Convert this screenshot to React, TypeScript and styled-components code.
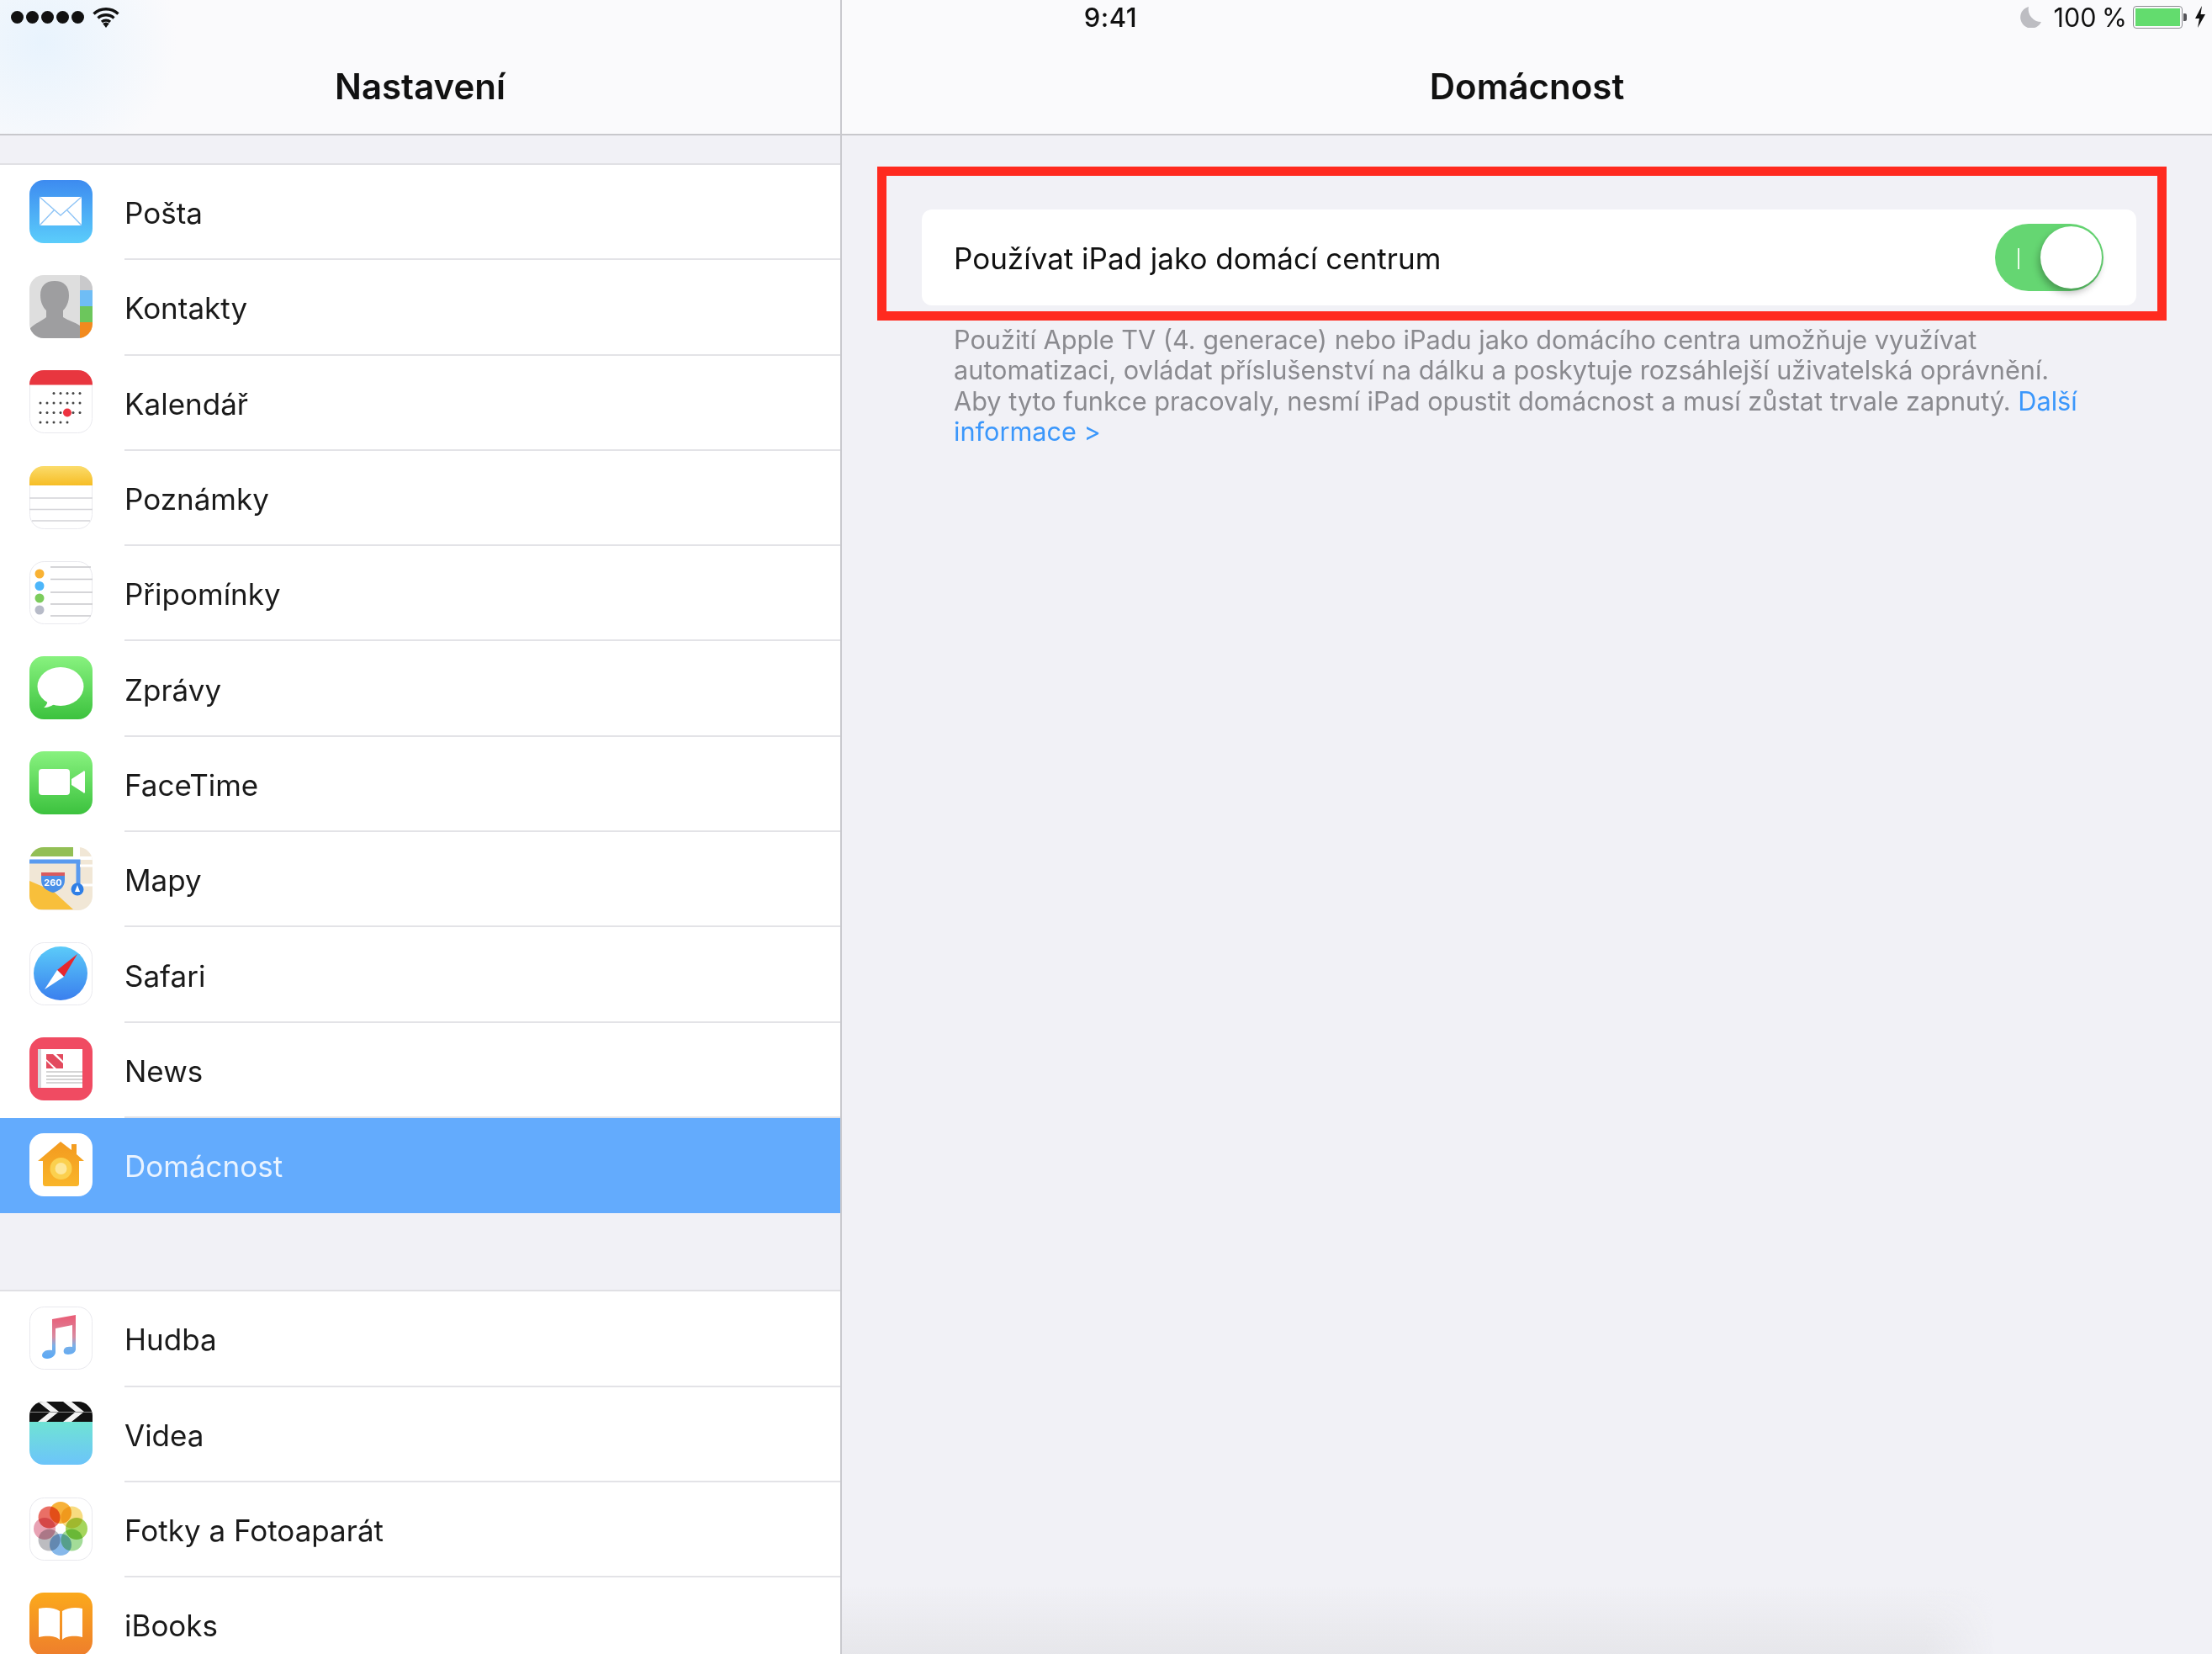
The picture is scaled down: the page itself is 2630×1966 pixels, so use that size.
import React from "react";
import styled, { createGlobalStyle } from "styled-components";

const GlobalStyle = createGlobalStyle`
  html, body {
    margin: 0;
    padding: 0;
    background: #f1f1f6;
  }
  * { box-sizing: border-box; }
`;

const Screen = styled.div`
  position: relative;
  display: flex;
  width: 2630px;
  height: 1966px;
  overflow: hidden;
  background: #f1f1f6;
  font-family: Inter, "Liberation Sans", sans-serif;
  color: #111;
`;

const StatusBar = styled.div`
  position: absolute;
  top: 0;
  left: 0;
  right: 0;
  height: 40px;
  padding: 0 8px 0 13px;
  display: grid;
  grid-template-columns: 1fr auto 1fr;
  align-items: center;
  z-index: 3;
`;
const StatusLeft = styled.div`
  display: flex;
  align-items: center;
  gap: 10px;
`;
const Dots = styled.div`
  display: flex;
  gap: 3px;
`;
const Dot = styled.span`
  width: 15px;
  height: 15px;
  border-radius: 50%;
  background: #111;
`;
const Clock = styled.div`
  font-size: 31px;
  font-weight: 500;
  letter-spacing: 0.5px;
  padding-left: 6px;
`;
const StatusRight = styled.div`
  display: flex;
  align-items: center;
  justify-content: flex-end;
  font-size: 30.5px;
  word-spacing: -2px;
`;
const Percent = styled.span`
  margin: 0 7px 0 15px;
`;
const Battery = styled.div`
  position: relative;
  width: 59px;
  height: 27px;
  padding: 2px;
  border: 1px solid #8e8e93;
  border-radius: 4px;
  margin-right: 15px;
  &::after {
    content: "";
    position: absolute;
    right: -6px;
    top: 8px;
    width: 4px;
    height: 9px;
    background: #55555a;
    border-radius: 0 2px 2px 0;
  }
`;
const BatteryFill = styled.div`
  height: 100%;
  background: #63dc6e;
`;

const Sidebar = styled.aside`
  width: 1001px;
  flex-shrink: 0;
  border-right: 2px solid #c9c9ce;
`;
const NavBar = styled.header<{ $tint?: boolean }>`
  height: 161px;
  padding-top: 75px;
  text-align: center;
  font-size: 42px;
  font-weight: 600;
  line-height: 56px;
  border-bottom: 2px solid #c8c8cc;
  background: ${(p) =>
    p.$tint
      ? "radial-gradient(ellipse 160px 150px at 50px 50px, #e8f3fd, rgba(250,250,252,0) 100%), #fafafc"
      : "#fafafc"};
`;
const Group = styled.section<{ $gap: number }>`
  margin-top: ${(p) => p.$gap}px;
  background: #fff;
  border-top: 2px solid #e0e0e4;
`;
const Row = styled.div<{ $selected?: boolean }>`
  height: 113.3px;
  padding-left: 35px;
  display: flex;
  align-items: center;
  gap: 38px;
  background: ${(p) => (p.$selected ? "#63abfd" : "#fff")};
`;
const IconBox = styled.div`
  width: 75px;
  height: 75px;
  flex-shrink: 0;
  margin-bottom: 3px;
  svg { display: block; }
`;
const Label = styled.div<{ $selected?: boolean; $last?: boolean }>`
  flex: 1;
  align-self: stretch;
  display: flex;
  align-items: center;
  padding-top: 3px;
  font-size: 35px;
  color: ${(p) => (p.$selected ? "#e9f3ff" : "#1a1a1a")};
  border-bottom: 2px solid ${(p) => (p.$last ? "transparent" : "#e3e3e7")};
`;

const Detail = styled.main`
  flex: 1;
  min-width: 0;
`;
const DetailBody = styled.div`
  padding: 37px 54px 0 42px;
`;
const Highlight = styled.div`
  width: 1533px;
  height: 183px;
  border: 11px solid #ff2a1f;
  padding: 40px 25px 7px 42px;
`;
const Card = styled.div`
  height: 114px;
  padding: 1px 39px 0 38px;
  background: #fff;
  border-radius: 12px;
  display: flex;
  align-items: center;
  justify-content: space-between;
  font-size: 35px;
`;
const Toggle = styled.div`
  position: relative;
  width: 129px;
  height: 80px;
  margin-top: -1px;
  border-radius: 40px;
  background: #65d672;
  &::before {
    content: "";
    position: absolute;
    left: 27px;
    top: 29px;
    width: 2px;
    height: 25px;
    background: #eafbe9;
  }
`;
const Knob = styled.span`
  position: absolute;
  right: 2px;
  top: 3px;
  width: 73px;
  height: 74px;
  border-radius: 50%;
  background: #fff;
  box-shadow: -2px 5px 9px rgba(0, 0, 0, 0.28);
`;
const Footnote = styled.p`
  margin: 5px 0 0 91px;
  font-size: 30.7px;
  line-height: 36.3px;
  color: #8a8a8f;
  white-space: nowrap;
`;
const MoreLink = styled.span`
  color: #3b97fb;
`;
const BottomShade = styled.div`
  position: absolute;
  left: 1001px;
  bottom: 0;
  width: 1370px;
  height: 80px;
  background: linear-gradient(rgba(226, 226, 230, 0), #e6e6ea);
  mask-image: linear-gradient(to right, #000 94%, transparent);
  pointer-events: none;
`;
const Petal = styled.circle`
  mix-blend-mode: multiply;
`;

const WifiIcon = () => (
  <svg width="32" height="25" viewBox="0 0 32 25">
    <g fill="none" stroke="#111" strokeWidth="3.4">
      <path d="M1.5 8.5a21 21 0 0 1 29 0" />
      <path d="M6.5 13.5a14 14 0 0 1 19 0" />
      <path d="M11 18a7.5 7.5 0 0 1 10 0" />
    </g>
    <path d="M16 25l-3.8-5a6 6 0 0 1 7.6 0z" fill="#111" />
  </svg>
);
const MoonIcon = () => (
  <svg width="26" height="25" viewBox="0 0 26 25">
    <path d="M11 0A13 13 0 1 0 26 18 15 15 0 0 1 11 0z" fill="#bdbdc2" />
  </svg>
);
const BoltIcon = () => (
  <svg width="12" height="26" viewBox="0 0 12 26">
    <path d="M8 0L0 15h5l-2 11 9-16H6.500z" fill="#111" />
  </svg>
);

const Frame = ({ children }: { children: React.ReactNode }) => (
  <svg width="75" height="75" viewBox="0 0 75 75">{children}</svg>
);
const Tile = ({ fill = "#fff", line = true }: { fill?: string; line?: boolean }) => (
  <rect x="0.5" y="0.5" width="74" height="74" rx="17" fill={fill} stroke={line ? "#e9e9ee" : "none"} />
);
const Fade = ({ id, from, to }: { id: string; from: string; to: string }) => (
  <defs>
    <linearGradient id={id} x1="0" y1="0" x2="0" y2="1">
      <stop offset="0" stopColor={from} />
      <stop offset="1" stopColor={to} />
    </linearGradient>
  </defs>
);

const MailIcon = () => (
  <Frame>
    <Fade id="mail" from="#3d8bf0" to="#5bcdfb" />
    <rect width="75" height="75" rx="17" fill="url(#mail)" />
    <rect x="12" y="20" width="50" height="34" fill="#fff" />
    <path d="M12 20l25 22 25-22M12 54l18-19M62 54L44 35" fill="none" stroke="#8ec4f6" strokeWidth="1.4" />
  </Frame>
);
const ContactsIcon = () => (
  <Frame>
    <clipPath id="contacts"><rect width="75" height="75" rx="17" /></clipPath>
    <g clipPath="url(#contacts)">
      <rect width="75" height="75" fill="#dedede" />
      <path d="M30 7c11 0 17 6 17 17 0 8-3 14-7 18v8c6 4 14 6 20 10v15H1V63c6-6 13-8 19-13v-8c-4-4-7-10-7-18C13 13 19 7 30 7z" fill="#9e9ea0" />
      <rect x="60" width="15" height="18" fill="#c9c9cb" />
      <rect x="60" y="18" width="15" height="19" fill="#6fbdf5" />
      <rect x="60" y="37" width="15" height="19" fill="#6cc65c" />
      <rect x="60" y="56" width="15" height="19" fill="#f28a1e" />
    </g>
  </Frame>
);
const CalendarIcon = () => {
  const rows = [
    { y: 27.5, xs: [29, 37, 45, 52, 60] },
    { y: 39, xs: [13, 21, 29, 37, 45, 52, 60] },
    { y: 50.500, xs: [13, 21, 29, 37, 52, 60] },
    { y: 62, xs: [13, 21, 29, 37, 45] },
  ];
  return (
    <Frame>
      <clipPath id="calendar"><rect width="75" height="75" rx="17" /></clipPath>
      <Tile />
      <rect width="75" height="17.500" fill="#e8363f" clipPath="url(#calendar)" />
      {rows.map((r) => r.xs.map((x) => <circle key={`${r.y}-${x}`} cx={x} cy={r.y} r="1.500" fill="#444" />))}
      <circle cx="45" cy="50.500" r="5" fill="#ee3341" />
    </Frame>
  );
};
const NotesIcon = () => (
  <Frame>
    <Fade id="notes" from="#fbdc6c" to="#f6bd25" />
    <clipPath id="notesClip"><rect width="75" height="75" rx="17" /></clipPath>
    <Tile />
    <rect width="75" height="23" fill="url(#notes)" clipPath="url(#notesClip)" />
    <path d="M0 38h75M0 51.500h75M3 65h69" stroke="#d4d4d8" strokeWidth="1.400" />
  </Frame>
);
const RemindersIcon = () => (
  <Frame>
    <Tile />
    <path d="M25 7h48M25 21.500h50M25 37h50M25 51h50M25 65h48" stroke="#c8c8cc" strokeWidth="1.400" />
    <circle cx="12" cy="15" r="5.500" fill="#f9b233" />
    <circle cx="12" cy="29.500" r="5.500" fill="#4db6fa" />
    <circle cx="12" cy="44" r="5.500" fill="#7ccc5c" />
    <circle cx="12" cy="58" r="5.500" fill="#b7bbc8" />
  </Frame>
);
const MessagesIcon = () => (
  <Frame>
    <Fade id="messages" from="#88f27f" to="#3cc23e" />
    <rect width="75" height="75" rx="17" fill="url(#messages)" />
    <ellipse cx="37" cy="36" rx="27.500" ry="23" fill="#fff" />
    <path d="M22 50c0 5-2 9-5 11 5 0 11-2 14-6z" fill="#fff" />
  </Frame>
);
const FaceTimeIcon = () => (
  <Frame>
    <Fade id="facetime" from="#88f27f" to="#3cc23e" />
    <rect width="75" height="75" rx="17" fill="url(#facetime)" />
    <rect x="11" y="21" width="37" height="31" rx="4" fill="#fff" />
    <path d="M50 33l14-9a1 1 0 0 1 2 1v23a1 1 0 0 1-2 1L50 40z" fill="#fff" />
  </Frame>
);
const MapsIcon = () => (
  <Frame>
    <clipPath id="maps"><rect width="75" height="75" rx="17" /></clipPath>
    <g clipPath="url(#maps)">
      <rect width="75" height="75" fill="#f1e7d6" />
      <rect width="52" height="11" fill="#93bf55" />
      <rect y="11" width="75" height="4" fill="#fff" />
      <path d="M0 17h58v30" fill="none" stroke="#5a9bef" strokeWidth="5" />
      <path d="M0 40l28 12 24 22H0z" fill="#f8bf3b" />
      <rect x="52" width="8" height="12" fill="#fff" />
      <path d="M60 22h15M60 45h15" stroke="#fff" strokeWidth="3" />
      <path d="M67 75l8-9v9z" fill="#f8bf3b" />
      <path d="M14 30h28v9c0 9-7 13-14 15-7-2-14-6-14-15z" fill="#4a90e8" />
      <rect x="14" y="30" width="28" height="4" fill="#d95b5e" />
      <text x="28" y="46" textAnchor="middle" fontSize="11" fontWeight="700" fill="#fff" fontFamily="Inter, sans-serif">260</text>
      <circle cx="57" cy="50" r="7.500" fill="#2f7fe6" />
      <path d="M57 45l3 8h-6z" fill="#fff" />
    </g>
  </Frame>
);
const SafariIcon = () => (
  <Frame>
    <Fade id="safari" from="#5bcbf9" to="#3a7fee" />
    <Tile />
    <circle cx="37" cy="37" r="32" fill="url(#safari)" />
    <path d="M57 14L33 33l8 8z" fill="#e8262c" />
    <path d="M18 56l15-23 8 8z" fill="#fff" />
  </Frame>
);
const NewsIcon = () => (
  <Frame>
    <rect width="75" height="75" rx="17" fill="#f04b62" />
    <rect x="10" y="14" width="53" height="46" fill="#fff" />
    <rect x="10" y="14" width="4" height="46" fill="#d8d8dc" />
    <path d="M20 20h8l12 11v6h-8L20 26zM20 28l9 9h-9zM32 20h8v8z" fill="#e34a5e" />
    <path d="M20 41h43M20 46h43M20 50h43M20 54h43" stroke="#aaa" strokeWidth="1" />
  </Frame>
);
const HomeIcon = () => (
  <Frame>
    <Fade id="home" from="#f39a1f" to="#f9b52a" />
    <rect width="75" height="75" rx="17" fill="#fff" />
    <path d="M37 10l13 10v-7h6v12l9 8H59v27c0 2-1 3-3 3H19c-2 0-3-1-3-3V33H10z" fill="url(#home)" />
    <circle cx="37.500" cy="42" r="13" fill="#fbd04e" />
    <circle cx="37.500" cy="42" r="7" fill="#fde79a" />
  </Frame>
);
const MusicIcon = () => (
  <Frame>
    <defs>
      <linearGradient id="music" x1="0" y1="0" x2="0" y2="1">
        <stop offset="0" stopColor="#ea5b75" />
        <stop offset="0.5" stopColor="#d98aa0" />
        <stop offset="0.7" stopColor="#7ab0e8" />
        <stop offset="1" stopColor="#5aa8f5" />
      </linearGradient>
    </defs>
    <Tile />
    <path
      d="M27 15l28-5v41c0 3-4 6-9 6s-6-3-5-6 5-4 10-3V22l-20 4v28c0 4-4 8-10 8s-7-4-5-7 6-4 11-3z"
      fill="url(#music)"
    />
  </Frame>
);
const VideosIcon = () => (
  <Frame>
    <Fade id="videos" from="#6fe3d4" to="#6cc4fa" />
    <clipPath id="videosClip"><rect width="75" height="75" rx="17" /></clipPath>
    <g clipPath="url(#videosClip)">
      <rect y="24" width="75" height="51" fill="url(#videos)" />
      <rect width="75" height="24" fill="#111" />
      <path d="M10 0h10l15 12-15 12H10l15-12zM40 0h10l15 12-15 12H40l15-12z" fill="#f2f2f2" />
      <rect y="12" width="75" height="1" fill="#888" />
    </g>
  </Frame>
);
const PhotosIcon = () => {
  const petals = ["#f7b23a", "#f8dc80", "#a5d65c", "#a3dc98", "#86b8ea", "#bcbcc0", "#e8a2b4", "#ea6f66"];
  return (
    <Frame>
      <Tile />
      {petals.map((c, i) => {
        const a = (i * Math.PI) / 4 - Math.PI / 2;
        return <Petal key={c} cx={37 + Math.cos(a) * 19} cy={37 + Math.sin(a) * 19} r="13" fill={c} />;
      })}
    </Frame>
  );
};
const BooksIcon = () => (
  <Frame>
    <Fade id="books" from="#fba91c" to="#ee7e2c" />
    <rect width="75" height="75" rx="17" fill="url(#books)" />
    <path d="M11 19c9-2 19-1 25 3v34c-5-5-16-5-25-3zM39 22c6-4 16-5 24-3v34c-8-2-19-2-24 3z" fill="#fff" />
  </Frame>
);

interface IItem {
  name: string;
  icon: () => React.ReactElement;
  selected?: boolean;
}
const firstGroup: IItem[] = [
  { name: "Pošta", icon: MailIcon },
  { name: "Kontakty", icon: ContactsIcon },
  { name: "Kalendář", icon: CalendarIcon },
  { name: "Poznámky", icon: NotesIcon },
  { name: "Připomínky", icon: RemindersIcon },
  { name: "Zprávy", icon: MessagesIcon },
  { name: "FaceTime", icon: FaceTimeIcon },
  { name: "Mapy", icon: MapsIcon },
  { name: "Safari", icon: SafariIcon },
  { name: "News", icon: NewsIcon },
  { name: "Domácnost", icon: HomeIcon, selected: true },
];
const secondGroup: IItem[] = [
  { name: "Hudba", icon: MusicIcon },
  { name: "Videa", icon: VideosIcon },
  { name: "Fotky a Fotoaparát", icon: PhotosIcon },
  { name: "iBooks", icon: BooksIcon },
];

function SettingsGroup({ items, gap }: { items: IItem[]; gap: number }) {
  return (
    <Group $gap={gap}>
      {items.map((item, i) => (
        <Row key={item.name} $selected={item.selected}>
          <IconBox><item.icon /></IconBox>
          <Label $selected={item.selected} $last={item.selected || i === items.length - 1}>{item.name}</Label>
        </Row>
      ))}
    </Group>
  );
}

export default function App() {
  return (
    <>
      <GlobalStyle />
      <Screen>
        <StatusBar>
          <StatusLeft>
            <Dots>{[0, 1, 2, 3, 4].map((n) => <Dot key={n} />)}</Dots>
            <WifiIcon />
          </StatusLeft>
          <Clock>9:41</Clock>
          <StatusRight>
            <MoonIcon />
            <Percent>100 %</Percent>
            <Battery><BatteryFill /></Battery>
            <BoltIcon />
          </StatusRight>
        </StatusBar>
        <Sidebar>
          <NavBar $tint>Nastavení</NavBar>
          <SettingsGroup items={firstGroup} gap={33} />
          <SettingsGroup items={secondGroup} gap={91} />
        </Sidebar>
        <Detail>
          <NavBar>Domácnost</NavBar>
          <DetailBody>
            <Highlight>
              <Card>
                Používat iPad jako domácí centrum
                <Toggle><Knob /></Toggle>
              </Card>
            </Highlight>
            <Footnote>
              Použití Apple TV (4. generace) nebo iPadu jako domácího centra umožňuje využívat<br />
              automatizaci, ovládat příslušenství na dálku a poskytuje rozsáhlejší uživatelská oprávnění.<br />
              Aby tyto funkce pracovaly, nesmí iPad opustit domácnost a musí zůstat trvale zapnutý. <MoreLink>Další</MoreLink><br />
              <MoreLink>informace &gt;</MoreLink>
            </Footnote>
          </DetailBody>
        </Detail>
        <BottomShade />
      </Screen>
    </>
  );
}
